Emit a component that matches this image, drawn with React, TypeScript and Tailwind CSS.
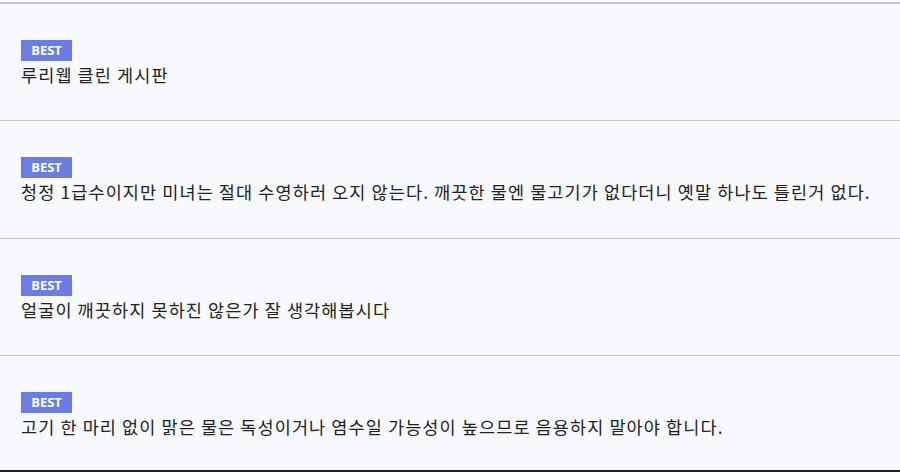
import React from "react";

const items = [
  "루리웹 클린 게시판",
  "청정 1급수이지만 미녀는 절대 수영하러 오지 않는다. 깨끗한 물엔 물고기가 없다더니 옛말 하나도 틀린거 없다.",
  "얼굴이 깨끗하지 못하진 않은가 잘 생각해봅시다",
  "고기 한 마리 없이 맑은 물은 독성이거나 염수일 가능성이 높으므로 음용하지 말아야 합니다.",
];

export default function App() {
  return (
    <div
      className="w-[900px] h-[472px] bg-white pt-[2px] overflow-hidden"
      style={{ fontFamily: '"Noto Sans CJK KR", "Noto Sans", sans-serif' }}
    >
      <div className="border-t-2 border-[#c9c9cb] bg-[#f7f9fd]">
        {items.map((t, i) => (
          <div
            key={i}
            className={
              i === 3
                ? "h-[116px] border-b-2 border-[#1e1e1e] pl-[21px] pt-[36px]"
                : i === 1
                ? "h-[118px] border-b border-[#c6c6c8] pl-[21px] pt-[36px]"
                : "h-[117px] border-b border-[#c6c6c8] pl-[21px] pt-[36px]"
            }
          >
            <div className="flex flex-col items-start">
              <span
                className="inline-flex h-[21px] w-[51px] items-center justify-center bg-[#6a7de6] text-[13px] font-bold text-white"
                style={{ fontFamily: '"Open Sans", "Noto Sans", sans-serif' }}
              >
                BEST
              </span>
              <span className="mt-[1px] text-[17.5px] leading-[26px] tracking-[1.1px] text-[#222222] whitespace-nowrap">
                {t}
              </span>
            </div>
          </div>
        ))}
      </div>
    </div>
  );
}
